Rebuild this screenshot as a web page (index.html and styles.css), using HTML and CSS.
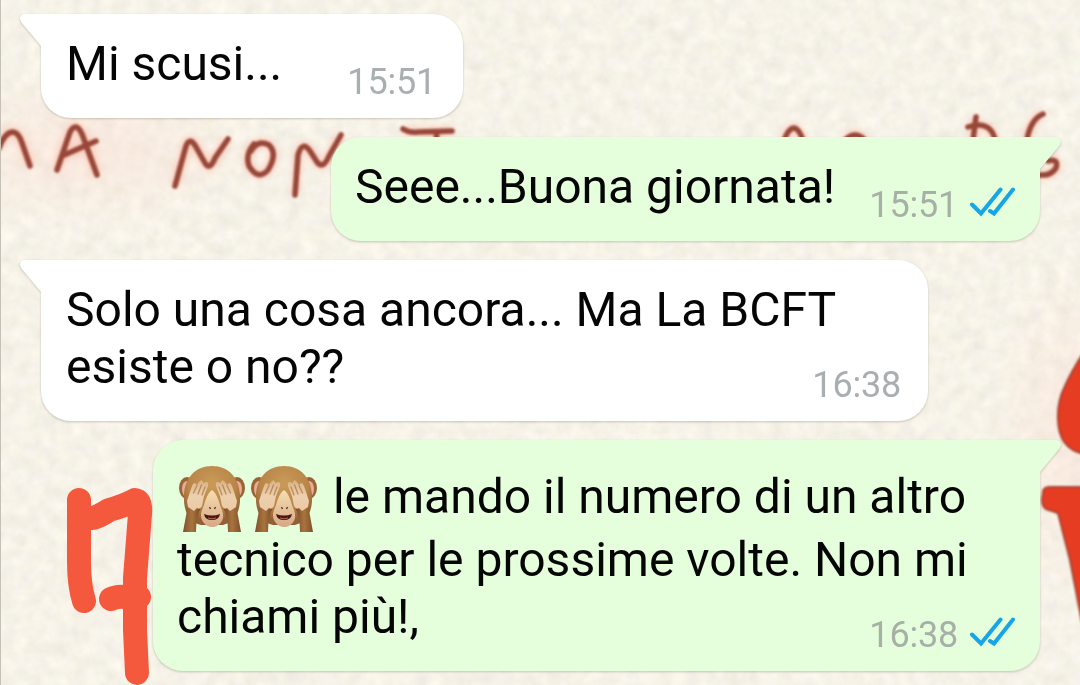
FILE: index.html
```html
<!DOCTYPE html>
<html lang="it">
<head>
    <meta charset="UTF-8">
    <meta name="viewport" content="width=device-width, initial-scale=1.0">
    <title>Chat</title>
    <link rel="stylesheet" href="styles.css">
</head>
<body>
    <!-- Wallpaper -->
    <svg class="wallpaper" viewBox="0 0 1080 685" aria-hidden="true">
        <defs>
            <filter id="grain" x="0" y="0" width="100%" height="100%" color-interpolation-filters="sRGB">
                <feTurbulence type="fractalNoise" baseFrequency="0.07" numOctaves="3" seed="4"/>
                <feColorMatrix values="0.06 0.05 0 0 0.91  0.05 0.06 0 0 0.895  0.05 0.05 0.04 0 0.84  0 0 0 0 1"/>
            </filter>
            <filter id="soft"><feGaussianBlur stdDeviation="0.8"/></filter>
            <filter id="halo"><feGaussianBlur stdDeviation="3"/></filter>
            <radialGradient id="blush">
                <stop offset="0" stop-color="#ffd0c2" stop-opacity="0.3"/>
                <stop offset="1" stop-color="#ffd0c2" stop-opacity="0"/>
            </radialGradient>
            <g id="writing">
                <path d="M-1 148Q5 132 13 132Q19 133 22 143L30 166"/>
                <path d="M57 170L70 132Q76 121 82 134L97 175M62 156L96 141"/>
                <path d="M175 186L186 146Q190 136 196 147L205 163Q210 171 215 158L228 139"/>
                <path d="M254 144Q245 154 249 166Q258 181 268 170Q278 154 269 145Q258 139 251 151"/>
                <path d="M295 195L298 155Q302 140 310 151L317 162Q323 170 329 156L341 135"/>
                <path d="M403 129Q409 133 418 132L452 131M437 132L436 142"/>
                <path d="M784 140Q794 116 803 140M846 139Q855 131 864 139"/>
                <path d="M976 117L973 140M968 127Q990 120 995 139"/>
                <path d="M1043 114Q1031 119 1027 139M1048 161Q1059 158 1056 168Q1051 176 1040 175"/>
            </g>
        </defs>
        <rect width="1080" height="685" filter="url(#grain)"/>
        <ellipse cx="80" cy="150" rx="180" ry="80" fill="url(#blush)"/>
        <ellipse cx="1080" cy="430" rx="90" ry="170" fill="url(#blush)"/>
        <use href="#writing" class="writing-halo" filter="url(#halo)"/>
        <use href="#writing" class="writing" filter="url(#soft)"/>
        <g class="lettering" filter="url(#soft)">
            <path d="M1084 352Q1071 372 1065 386Q1057 402 1058 420Q1059 449 1084 454Z"/>
            <path d="M1084 487H1053Q1042 486 1043 493Q1040 505 1046 509L1058 513L1070 560L1082 622Z"/>
        </g>
        <rect width="1" height="685" fill="#c6c1b6"/>
    </svg>

    <main class="chat">
        <div class="message received short">
            <svg class="tail" viewBox="0 0 22 34"><path d="M22 0H5Q-2 1 1 8L21 32H22Z"/></svg>
            <p class="text">Mi scusi...</p>
            <div class="meta"><span class="time">15:51</span></div>
        </div>

        <div class="message sent medium">
            <svg class="tail" viewBox="0 0 22 34"><path d="M0 0H17Q24 1 21 8L1 32H0Z"/></svg>
            <p class="text">Seee...Buona giornata!</p>
            <div class="meta">
                <span class="time">15:51</span>
                <svg class="ticks" viewBox="0 0 46 30"><path d="M3 17.5L12 26.5L31.5 2.500M21 24L25 26.5L44 2.500"/></svg>
            </div>
        </div>

        <div class="message received">
            <svg class="tail" viewBox="0 0 22 34"><path d="M22 0H5Q-2 1 1 8L21 32H22Z"/></svg>
            <p class="text">Solo una cosa ancora... Ma La BCFT<br>esiste o no??</p>
            <div class="meta"><span class="time">16:38</span></div>
        </div>

        <div class="message sent">
            <svg class="tail" viewBox="0 0 22 34"><path d="M0 0H17Q24 1 21 8L1 32H0Z"/></svg>
            <p class="text"><svg class="emoji" viewBox="0 0 72 70" aria-hidden="true">
                <defs>
                    <radialGradient id="fur" cx="0.5" cy="0.3" r="0.65">
                        <stop offset="0" stop-color="#c99b58"/>
                        <stop offset="0.65" stop-color="#b98549"/>
                        <stop offset="1" stop-color="#936035"/>
                    </radialGradient>
                    <linearGradient id="hand" x1="0" y1="0" x2="0" y2="1">
                        <stop offset="0" stop-color="#dab183"/>
                        <stop offset="0.5" stop-color="#ecd0ad"/>
                        <stop offset="1" stop-color="#ecc9a5"/>
                    </linearGradient>
                    <linearGradient id="arm" x1="0" y1="0" x2="1" y2="0">
                        <stop offset="0" stop-color="#80502a"/>
                        <stop offset="0.5" stop-color="#a8743f"/>
                        <stop offset="1" stop-color="#774822"/>
                    </linearGradient>
                    <linearGradient id="face" x1="0" y1="0" x2="0" y2="1">
                        <stop offset="0" stop-color="#f7deb0"/>
                        <stop offset="1" stop-color="#d5a887"/>
                    </linearGradient>
                    <g id="monkey">
                        <ellipse cx="10" cy="27" rx="8" ry="11" fill="#996537"/>
                        <ellipse cx="60" cy="27" rx="8" ry="11" fill="#996537"/>
                        <ellipse cx="10" cy="28" rx="5" ry="8" fill="#e9ab96"/>
                        <ellipse cx="60" cy="28" rx="5" ry="8" fill="#e9ab96"/>
                        <path d="M35 5C18 5 8 17 7 34C6 51 13 62 24 64H46C58 61 64 50 63 34C62 17 52 5 35 5Z" fill="url(#fur)"/>
                        <path d="M35 29C29 33 28 43 25 49C21 59 29 66 35 66C42 66 49 59 45 49C42 43 41 33 35 29Z" fill="url(#face)"/>
                        <path d="M27 53Q35 56 43 53Q42 59 35 59Q28 59 27 53Z" fill="#4a180f"/>
                        <path d="M31 57Q35 58.5 39 57" fill="none" stroke="#ad6655"/>
                        <path d="M32.500 46L33.500 48M38.500 46L37.500 48" stroke="#654127" stroke-width="1.500"/>
                        <g id="paw">
                            <path d="M11 44L24 46Q19 56 19 71H6Q8 60 11 44Z" fill="url(#arm)"/>
                            <path d="M10 40L15 25Q17 20 19 23L20 24L23 20Q26 18 26 22L29 21Q32 21 31 25L27 35L25 45Q23 49 20 47L17 50L11 46Z" fill="url(#hand)"/>
                            <path d="M16.500 32L20 24.500M21 33L24.500 24M25 34L28 26" stroke="#b98a5d" stroke-width="1.300" stroke-linecap="round" fill="none"/>
                        </g>
                        <use href="#paw" transform="matrix(-1 0 0 1 70 0)"/>
                    </g>
                </defs>
                <use href="#monkey"/>
            </svg><svg class="emoji" viewBox="0 0 72 70" aria-hidden="true"><use href="#monkey"/></svg> le mando il numero di un altro<br>tecnico per le prossime volte. Non mi<br>chiami più!,</p>
            <div class="meta">
                <span class="time">16:38</span>
                <svg class="ticks" viewBox="0 0 46 30"><path d="M3 17.500L12 26.500L31.500 2.500M21 24L25 26.500L44 2.500"/></svg>
            </div>
        </div>
    </main>

    <!-- Marker doodle over the chat -->
    <svg class="doodle" viewBox="0 0 90 205" aria-hidden="true">
        <path d="M13 20V82Q13 105 18 121M27 38Q34 36 43 30Q58 26 69 20Q75 21 74 34L69 98V150L71 193M45 119Q51 116 59 117H73"/>
    </svg>
</body>
</html>
```
FILE: styles.css
```css
* {
    box-sizing: border-box;
}

body {
    margin: 0;
    width: 1080px;
    height: 685px;
    position: relative;
    overflow: hidden;
    background: #f7f3e9;
    font-family: Roboto, "Liberation Sans", sans-serif;
}

.wallpaper {
    position: absolute;
    inset: 0;
    width: 1080px;
    height: 685px;
}

.writing {
    fill: none;
    stroke: #984737;
    stroke-width: 5.5;
    stroke-linecap: round;
    stroke-linejoin: round;
}

.writing-halo {
    fill: none;
    stroke: #ffb09c;
    stroke-width: 10;
    opacity: 0.5;
}

.lettering {
    fill: #e63c20;
    stroke: #a54331;
    stroke-width: 2;
}

.chat {
    position: relative;
    display: flex;
    flex-direction: column;
    gap: 19px;
    padding: 14px 40px 14px 41px;
}

.message {
    position: relative;
    display: grid;
    width: 887px;
    padding: 21px 25px 26px;
    border-radius: 30px;
    color: #050505;
    filter: drop-shadow(0 1px 1px rgba(60, 50, 30, 0.25));
}

.short {
    width: 422px;
}

.medium {
    width: 709px;
}

.received {
    align-self: flex-start;
    background: #fff;
    border-top-left-radius: 0;
    fill: #fff;
}

.sent {
    align-self: flex-end;
    padding-left: 24px;
    background: #e5ffdc;
    border-top-right-radius: 0;
    fill: #e5ffdc;
}

.tail {
    position: absolute;
    top: 0;
    width: 22px;
    height: 34px;
}

.received .tail {
    left: -21px;
}

.sent .tail {
    right: -21px;
}

.text,
.meta {
    grid-area: 1 / 1;
}

.text {
    margin: 0;
    font-size: 48px;
    line-height: 57px;
    white-space: nowrap;
}

.meta {
    display: flex;
    align-self: end;
    justify-self: end;
    gap: 11px;
    margin-bottom: -8px;
}

.received .meta {
    margin-right: 2px;
}

.time {
    font-size: 36px;
    line-height: 36px;
    letter-spacing: -0.2px;
    color: #a9aeb1;
}

.sent .time {
    color: #a7b0a7;
}

.ticks {
    width: 46px;
    height: 30px;
    fill: none;
    stroke: #16a5e9;
    stroke-width: 4;
    stroke-linecap: round;
    stroke-linejoin: miter;
}

.emoji {
    width: 72px;
    height: 70px;
    vertical-align: -18.5px;
    overflow: visible;
}

.doodle {
    position: absolute;
    left: 66px;
    top: 480px;
    width: 90px;
    height: 205px;
    fill: none;
    stroke: #f5593d;
    stroke-width: 24;
    stroke-linecap: round;
    stroke-linejoin: round;
}
```
